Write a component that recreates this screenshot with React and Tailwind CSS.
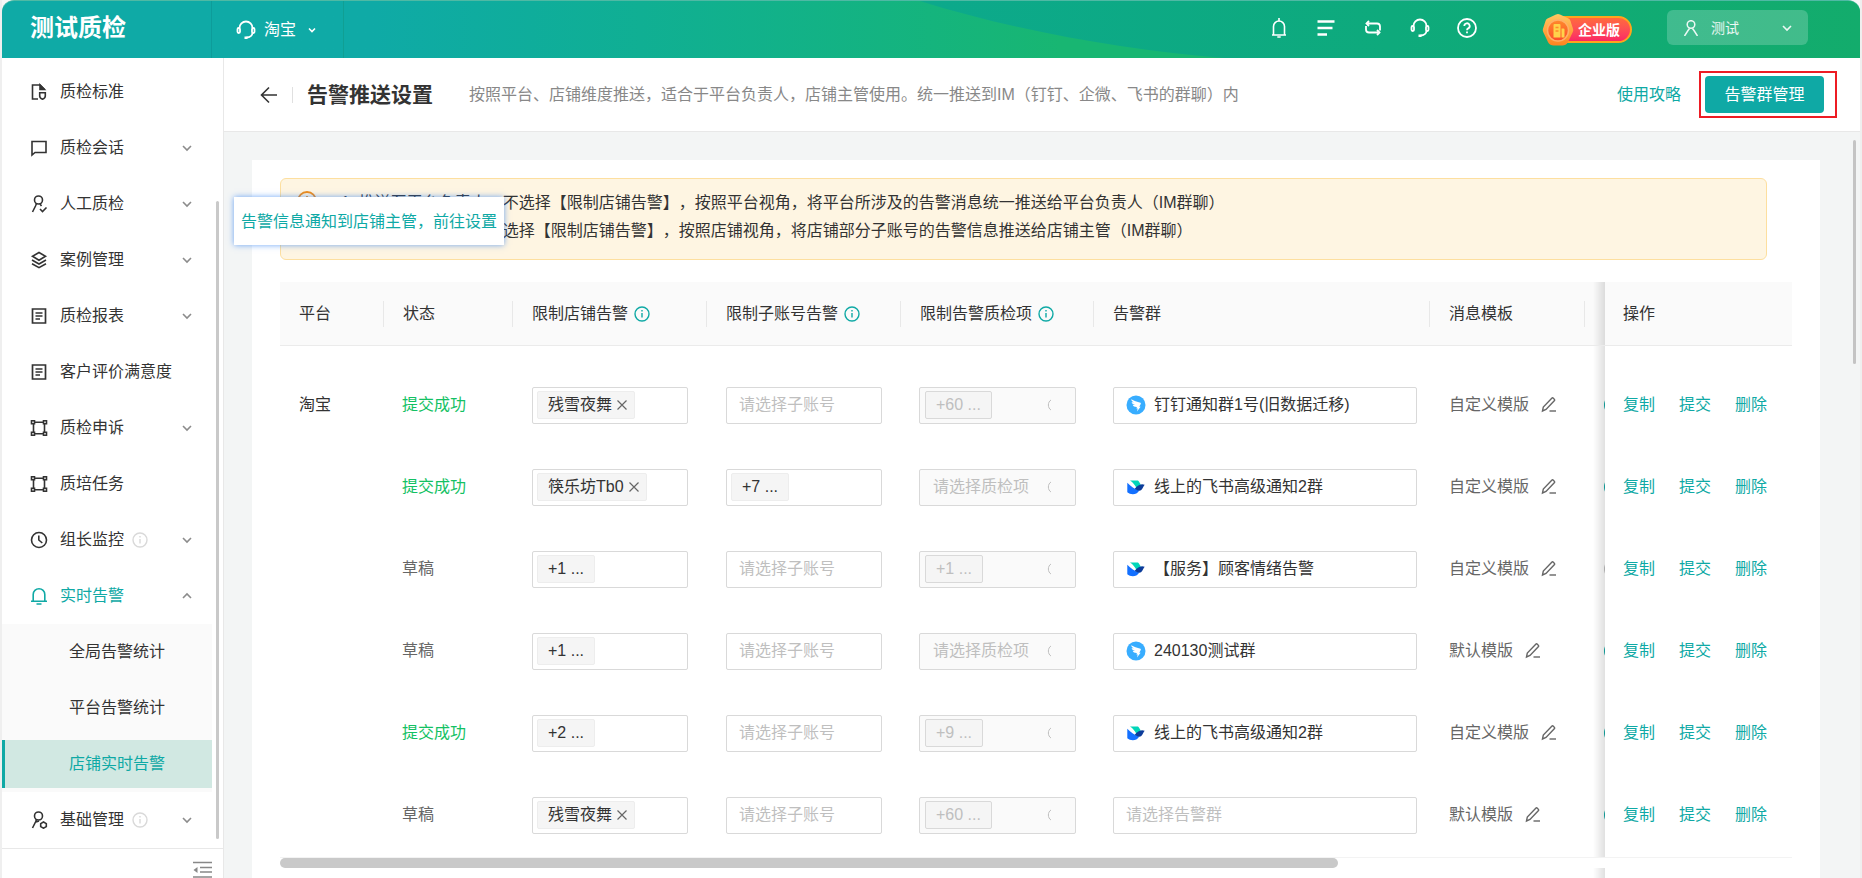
import React, { useState } from "react";

const Svg = ({ size = 18, sw = 2, children, className = "", vb = 24 }) => (
  <svg
    width={size}
    height={size}
    viewBox={`0 0 ${vb} ${vb}`}
    fill="none"
    stroke="currentColor"
    strokeWidth={sw}
    className={`shrink-0 ${className}`}
    aria-hidden="true"
  >
    {children}
  </svg>
);

const icons = {
  standard: (
    <Svg vb={18} sw={1.6}>
      <path d="M8 16H2.5V2H10l4.5 4.5" />
      <path d="M10 2v4.5h4.5z" fill="currentColor" />
      <path d="M9.7 9.7h5.6V13c0 1.8-1.3 2.6-2.8 3.2-1.5-.6-2.8-1.4-2.8-3.2z" />
    </Svg>
  ),
  chat: (
    <Svg vb={18} sw={1.6}>
      <path d="M2 2.5h14v11H5L2 16z" />
    </Svg>
  ),
  manual: (
    <Svg vb={18} sw={1.6}>
      <circle cx="8.5" cy="5" r="4" />
      <path d="M6.5 8.5L5.5 11 2.5 17M10 9l1.5 2" />
      <path d="M10 14l2.5 2.5L16.5 12.5" />
    </Svg>
  ),
  layers: (
    <Svg vb={18} sw={1.6}>
      <path d="M9 1.5l6.5 3.8L9 9.2 2.5 5.3z" />
      <path d="M2 9l7 4 7-4M2 12.7l7 4 7-4" />
    </Svg>
  ),
  report: (
    <Svg vb={18} sw={1.7}>
      <path d="M2.5 2h13v14h-13z" />
      <path d="M5.5 6h7M5.5 9h7M5.5 12h4.5" strokeWidth="1.4" />
    </Svg>
  ),
  nodes: (
    <Svg vb={18} sw={1.6}>
      <path d="M1.5 1.8h3v3h-3zM13.5 1.8h3v3h-3zM1.5 13.2h3v3h-3zM13.5 13.2h3v3h-3z" />
      <path d="M4.5 3.3h9M4.5 14.7h9M3.5 4.8v8.4M14.5 4.8v8.4" />
    </Svg>
  ),
  clock: (
    <Svg vb={18} sw={1.6}>
      <circle cx="9" cy="9" r="7.5" />
      <path d="M8.8 4.5V9l3.5 3" />
    </Svg>
  ),
  bell: (
    <Svg vb={18} sw={1.6}>
      <path d="M1 14.2h16M3.2 14V7.5a5.8 5.8 0 0 1 11.6 0V14M6.5 17h5" />
    </Svg>
  ),
  admin: (
    <Svg vb={18} sw={1.6}>
      <circle cx="8.5" cy="5" r="4" />
      <path d="M6.5 8.5L5.5 11 2.5 17M6 11l3-1" />
      <path d="M13.5 11l2.8 1.6v3L13.5 17.2l-2.8-1.6v-3z" />
    </Svg>
  ),
};

const menu = [
  { label: "质检标准", icon: icons.standard },
  { label: "质检会话", icon: icons.chat, arrow: true },
  { label: "人工质检", icon: icons.manual, arrow: true },
  { label: "案例管理", icon: icons.layers, arrow: true },
  { label: "质检报表", icon: icons.report, arrow: true },
  { label: "客户评价满意度", icon: icons.report },
  { label: "质检申诉", icon: icons.nodes, arrow: true },
  { label: "质培任务", icon: icons.nodes },
  { label: "组长监控", icon: icons.clock, arrow: true, info: true },
  {
    label: "实时告警",
    icon: icons.bell,
    arrow: true,
    open: true,
    children: ["全局告警统计", "平台告警统计", "店铺实时告警"],
  },
  { label: "基础管理", icon: icons.admin, arrow: true, info: true },
];

const rows = [
  { platform: "淘宝", done: true, shop: "残雪夜舞", item: "+60 ...", im: "ding", group: "钉钉通知群1号(旧数据迁移)", tpl: "自定义模版", on: true },
  { done: true, shop: "筷乐坊Tb0", sub: "+7 ...", im: "feishu", group: "线上的飞书高级通知2群", tpl: "自定义模版", on: true },
  { shop: "+1 ...", item: "+1 ...", im: "feishu", group: "【服务】顾客情绪告警", tpl: "自定义模版", on: false },
  { shop: "+1 ...", im: "ding", group: "240130测试群", tpl: "默认模版", on: true },
  { done: true, shop: "+2 ...", item: "+9 ...", im: "feishu", group: "线上的飞书高级通知2群", tpl: "自定义模版", on: true },
  { shop: "残雪夜舞", item: "+60 ...", tpl: "默认模版", on: true },
];

const columns = [
  { title: "平台", width: "w-[104px]" },
  { title: "状态", width: "w-[129px]" },
  { title: "限制店铺告警", width: "w-[194px]", info: true },
  { title: "限制子账号告警", width: "w-[194px]", info: true },
  { title: "限制告警质检项", width: "w-[193px]", info: true },
  { title: "告警群", width: "w-[336px]" },
  { title: "消息模板", width: "w-[155px]" },
];

// fixed right column with the soft edge on its left side
const fixedCol =
  "sticky right-0 before:absolute before:inset-y-0 before:right-full before:w-3 before:bg-linear-to-l before:from-black/12 before:to-transparent";

const Chevron = ({ up, className = "" }) => (
  <Svg size={10} vb={10} sw={1.6} className={className}>
    <path d={up ? "M1 7l4-4 4 4" : "M1 3l4 4 4-4"} />
  </Svg>
);

const InfoIcon = ({ className = "" }) => (
  <Svg size={16} vb={16} sw={1.4} className={className}>
    <circle cx="8" cy="8" r="7" />
    <path d="M8 7v4.5M8 4v1.5" />
  </Svg>
);

const HeadsetIcon = ({ size = 20 }) => (
  <Svg size={size} vb={20} sw={1.8}>
    <path d="M3.5 8a6.5 6.5 0 0 1 13 0M16.5 12.5c0 3-2.5 5-6 5" />
    <rect x="1.5" y="8" width="2.5" height="5" rx="1.2" />
    <rect x="16" y="8" width="2.5" height="5" rx="1.2" />
    <path d="M8.5 17.8h3" strokeWidth="2.5" />
  </Svg>
);

const DingIcon = () => (
  <svg width="20" height="20" viewBox="0 0 20 20" className="shrink-0" aria-hidden="true">
    <circle cx="10" cy="10" r="9.5" fill="#38adff" />
    <path
      d="M5.2 4.2c2.5 1.6 6 2.3 9.3 3.6.5.2.4.7.1 1.4l-1.3 2.5h1.3L11 16.5l.7-3.1h-1.3l.5-1.5c-2.3.1-3.6-.7-4.3-2.2 1 .3 2 .3 2.4.2-1.6-.4-2.9-1.3-3.4-3l2.1.5C6.3 6.5 5.3 5.5 5.2 4.2z"
      fill="#fff"
    />
  </svg>
);

const FeishuIcon = () => (
  <svg width="20" height="20" viewBox="0 0 20 20" className="shrink-0" aria-hidden="true">
    <path d="M4 3.500h8c1.300 1.200 2.300 3 2.700 4.500l-4 3.200C9 8 7 5.500 4 3.500z" fill="#00d6b9" />
    <path d="M1.300 5.800c3.500 3.600 7.300 6.600 12 7.600-1.700 2.700-4 3.800-6.400 3.800-2.200 0-4.200-.7-5.600-1.900z" fill="#1370ff" />
    <path d="M18.700 7.800c-1.400 1.200-1.900 4.300-3.700 5.500-2.300 1-4.700-.4-6.200-1.600 2.300-2.600 5.400-5.700 9.900-3.900z" fill="#0c3c9a" />
  </svg>
);

const EnterpriseBadge = () => (
  <div className="flex items-center pt-1">
    <svg width="32" height="34" viewBox="0 0 32 34" className="relative z-10 shrink-0" aria-hidden="true">
      <defs>
        <linearGradient id="gem" x1="0" y1="0" x2="0" y2="1">
          <stop offset="0" stopColor="#ffc862" />
          <stop offset="1" stopColor="#ff8420" />
        </linearGradient>
        <linearGradient id="coin" x1="0" y1="0" x2="0" y2="1">
          <stop offset="0" stopColor="#ff8a2b" />
          <stop offset="1" stopColor="#fb4a2c" />
        </linearGradient>
      </defs>
      <path
        d="M14 1.5q2-1 4 0l8.500 4q1.600.8 2 2.500l2.600 8q.4 1.500-.3 3l-5 10.500q-.7 1.500-2.300 2.200-1.500.8-3 .8h-9q-1.500 0-3-.8-1.600-.7-2.300-2.200L1.200 19q-.7-1.500-.3-3l2.600-8q.4-1.700 2-2.500z"
        fill="url(#gem)"
      />
      <circle cx="16" cy="17.5" r="10.5" fill="url(#coin)" stroke="#ffb066" strokeWidth="1.5" />
      <path d="M11.500 12q0-1 1-1h5q1 0 1 1v12.500h-7zM19.500 15.500h2q1 0 1 1v8h-3z" fill="#ffd24a" />
      <path d="M13.500 14.500h3M13.500 18h3" stroke="#ff8a2b" strokeWidth="1.3" />
    </svg>
    <span className="-ml-4 flex h-[27px] items-center rounded-r-full border-2 border-[#ffa41c] bg-linear-to-b from-[#ff6a3b] to-[#fb2465] pr-2.5 pl-4.5 text-sm font-bold text-white">
      企业版
    </span>
  </div>
);

const Header = () => (
  <header className="relative flex h-[58px] shrink-0 items-center overflow-hidden rounded-t-xl border-t border-[#4fb9a4] bg-linear-to-r from-[#0faaa6] from-20% to-[#18b672] to-57% text-white">
    <svg className="absolute inset-y-0 right-0 h-full w-[52%]" viewBox="0 0 966 58" preserveAspectRatio="none" aria-hidden="true">
      <defs>
        <linearGradient id="wave" x1="0" y1="0" x2="1" y2="0">
          <stop offset="0" stopColor="#0ca98c" />
          <stop offset="0.5" stopColor="#0eaa7c" />
          <stop offset="1" stopColor="#13ac6c" />
        </linearGradient>
      </defs>
      <path d="M26 0C120 30 230 50 330 58H966V0z" fill="url(#wave)" />
    </svg>
    <div className="relative flex h-full w-[210px] items-center border-r border-[#0d9c9a] pb-1 pl-7">
      <span className="text-2xl font-bold">测试质检</span>
    </div>
    <button className="relative flex h-full w-[132px] items-center gap-2 border-r border-[#109f93] pl-6 text-base">
      <HeadsetIcon />
      <span>淘宝</span>
      <Svg size={8} vb={8} sw={1.6} className="ml-1">
        <path d="M1 2.5l3 3 3-3" />
      </Svg>
    </button>
    <div className="relative ml-auto flex items-center pr-[52px] pb-1">
      <div className="flex items-center gap-[27px]">
        <button aria-label="通知">
          <Svg size={20} vb={20} sw={1.6}>
            <path d="M3 17h14M4.500 17V8.500a5.500 5.500 0 0 1 11 0V17M10 0v3M8.300 19h3.400" />
          </Svg>
        </button>
        <button aria-label="列表">
          <Svg size={20} vb={20} sw={2.6}>
            <path d="M1.500 3.500h17M1.500 10h15M1.500 16.500h9.500" />
          </Svg>
        </button>
        <button aria-label="切换">
          <Svg size={20} vb={20} sw={1.8}>
            <path d="M5 5.500h9a3 3 0 0 1 3 3v4M15 14.500H6a3 3 0 0 1-3-3V8" />
            <path d="M6 3L3.500 5.500 6 8M14 12l2.500 2.500L14 17" />
          </Svg>
        </button>
        <button aria-label="客服">
          <HeadsetIcon />
        </button>
        <button aria-label="帮助">
          <Svg size={20} vb={20} sw={1.8}>
            <circle cx="10" cy="10" r="9" />
            <path d="M7.300 8a2.700 2.700 0 1 1 3.900 2.400c-.8.400-1.200.8-1.200 1.800M10 13.500v1.800" />
          </Svg>
        </button>
      </div>
      <div className="ml-[65px]">
        <EnterpriseBadge />
      </div>
      <button className="ml-[35px] flex h-[35px] w-[141px] items-center rounded-md bg-white/20 px-4 text-sm text-white/90">
        <Svg size={16} vb={16} sw={1.5}>
          <circle cx="8" cy="4.5" r="3.8" />
          <path d="M1.5 16l3.5-5.5 1.5-2M14.5 16L11 10.5 9.5 8.5" />
        </Svg>
        <span className="ml-3">测试</span>
        <Chevron className="ml-auto" />
      </button>
    </div>
  </header>
);

const Sidebar = () => (
  <aside className="relative flex w-[222px] shrink-0 flex-col border-r border-[#e8e8e8] bg-white">
    <nav className="min-h-0 flex-1 overflow-hidden pt-1.5 pr-[11px]">
      {menu.map((m) => (
        <div key={m.label}>
          <a
            href="#"
            className={`flex h-14 items-center pr-5 pl-7 text-base ${m.open ? "text-[#0fa9a5]" : "text-[#333]"}`}
          >
            {m.icon}
            <span className="ml-3">{m.label}</span>
            {m.info && <InfoIcon className="ml-2 text-[#d9d9d9]" />}
            {m.arrow && <Chevron up={m.open} className="ml-auto text-[#8c8c8c]" />}
          </a>
          {m.children && (
            <div className="bg-[#fafafa]">
              {m.children.map((c, i) => (
                <div key={c} className="flex h-14 items-center">
                  <a
                    href="#"
                    className={`flex h-12 flex-1 items-center border-l-3 pl-16 text-base ${
                      i === 2 ? "border-[#0fa9a5] bg-[#d1e8e2] text-[#0fa9a5]" : "border-transparent text-[#333]"
                    }`}
                  >
                    {c}
                  </a>
                </div>
              ))}
            </div>
          )}
        </div>
      ))}
    </nav>
    <div className="absolute top-[143px] right-1 bottom-[39px] w-[3px] rounded-full bg-[#c9c9c9]" />
    <button
      aria-label="收起菜单"
      className="flex h-[30px] items-end justify-end overflow-hidden border-t border-[#e8e8e8] pr-2.5 text-[#888]"
    >
      <svg width="20" height="17" viewBox="0 0 20 17" fill="none" stroke="currentColor" strokeWidth="1.6" aria-hidden="true">
        <path d="M0 1.5h19M7 6.5h12M7 11h12M0 16h19" />
        <path d="M4.5 6v6L0.5 9z" fill="currentColor" stroke="none" />
      </svg>
    </button>
  </aside>
);

const Tag = ({ text, closable, disabled }) => (
  <span
    className={`flex h-7 items-center gap-1 rounded-xs border bg-[#f5f5f5] pl-2.5 ${closable ? "pr-1.5" : "pr-2.5"} ${
      disabled ? "border-[#d9d9d9] text-[#bfbfbf]" : "border-[#ededed] text-[#333]"
    }`}
  >
    {text}
    {closable && (
      <Svg size={12} vb={12} sw={1.2} className="text-[#666]">
        <path d="M1.5 1.5l9 9M10.5 1.5l-9 9" />
      </Svg>
    )}
  </span>
);

const SelectBox = ({ value, placeholder, disabled }) => (
  <button
    disabled={disabled}
    className={`flex h-[37px] w-full items-center rounded-xs border border-[#d9d9d9] text-base ${
      disabled ? "bg-[#fafafa] pl-[5px]" : "bg-white pl-1"
    }`}
  >
    {value ? (
      <Tag text={value} disabled={disabled} closable={!value.startsWith("+")} />
    ) : (
      <span className="pl-2 text-[#bfbfbf]">{placeholder}</span>
    )}
    {disabled && (
      <svg width="4" height="12" viewBox="0 0 4 12" fill="none" stroke="#bfbfbf" className="mr-6 ml-auto" aria-hidden="true">
        <path d="M4 1C.5 3 .5 9 4 11" />
      </svg>
    )}
  </button>
);

const PushTable = () => {
  const [switches, setSwitches] = useState(rows.map((r) => r.on));

  return (
    <div className="mt-[22px] overflow-hidden">
      <table className="w-[2165px] table-fixed border-separate border-spacing-0 text-left text-base text-[#333]">
        <thead>
          <tr className="h-16">
            {columns.map((c) => (
              <th key={c.title} className={`${c.width} border-b border-[#ebebeb] bg-[#fafafa] p-0 font-normal`}>
                <div className="flex h-[26px] items-center gap-1.5 border-r border-[#e8e8e8] pl-[19px] whitespace-nowrap">
                  {c.title}
                  {c.info && <InfoIcon className="text-[#0fa9a5]" />}
                </div>
              </th>
            ))}
            <th className="border-b border-[#ebebeb] bg-[#fafafa]" />
            <th className={`${fixedCol} w-[187px] border-b border-[#ebebeb] bg-[#fafafa] pl-[18px] font-normal`}>操作</th>
          </tr>
        </thead>
        <tbody>
          <tr className="h-[18px]">
            <td colSpan={8} />
            <td className={`${fixedCol} bg-white`} />
          </tr>
          {rows.map((r, i) => (
            <tr key={i} className="h-[82px]">
              <td className="pl-[19px]">{r.platform}</td>
              <td className={`pl-[18px] ${r.done ? "text-[#13c163]" : "text-[#666]"}`}>{r.done ? "提交成功" : "草稿"}</td>
              <td className="px-[19px]">
                <SelectBox value={r.shop} />
              </td>
              <td className="px-[19px]">
                <SelectBox value={r.sub} placeholder="请选择子账号" />
              </td>
              <td className="px-[18px]">
                <SelectBox value={r.item} placeholder="请选择质检项" disabled />
              </td>
              <td className="pr-[13px] pl-[19px]">
                <button
                  className={`flex h-[37px] w-full items-center gap-2 rounded-xs border border-[#d9d9d9] bg-white pl-3 text-base ${
                    r.group ? "" : "text-[#bfbfbf]"
                  }`}
                >
                  {r.im === "ding" && <DingIcon />}
                  {r.im === "feishu" && <FeishuIcon />}
                  <span>{r.group || "请选择告警群"}</span>
                </button>
              </td>
              <td className="pl-[19px] text-[#666]">
                <span className="flex items-center gap-3">
                  {r.tpl}
                  <button aria-label="编辑模版">
                    <Svg size={16} vb={16} sw={1.4}>
                      <path d="M1.5 14l.8-4L11 1c.7-.7 3.3 1.6 2.5 2.5L5 12.500z" />
                      <path d="M8.5 14H15" />
                    </Svg>
                  </button>
                </span>
              </td>
              <td className="pl-[19px]">
                <button
                  role="switch"
                  aria-checked={switches[i]}
                  aria-label="启用"
                  onClick={() => setSwitches(switches.map((s, n) => (n === i ? !s : s)))}
                  className={`block h-[22px] w-11 rounded-full ${switches[i] ? "bg-[#0fa9a5]" : "bg-[#bfbfbf]"}`}
                />
              </td>
              <td className={`${fixedCol} bg-white pl-[18px]`}>
                <div className="flex gap-6 text-[#0fa9a5]">
                  <a href="#">复制</a>
                  <a href="#">提交</a>
                  <a href="#">删除</a>
                </div>
              </td>
            </tr>
          ))}
          <tr className="h-[82px]">
            <td colSpan={8} />
            <td className={`${fixedCol} bg-white`} />
          </tr>
        </tbody>
      </table>
    </div>
  );
};

const App = () => (
  <div className="flex h-screen flex-col overflow-hidden border-x-2 border-[#efefef] bg-[#f7f7f7] font-['Liberation_Sans','Noto_Sans_CJK_SC',sans-serif] [text-spacing-trim:space-all]">
    <Header />
    <div className="relative flex min-h-0 flex-1">
      <Sidebar />
      <main className="flex min-w-0 flex-1 flex-col bg-[#f3f5f5]">
        <div className="flex h-[74px] shrink-0 items-center border-b border-[#e8e8e8] bg-white pr-[23px] pl-9">
          <button aria-label="返回" className="text-[#333]">
            <Svg size={18} vb={18} sw={1.6}>
              <path d="M17 9H2M9 1.5L1.5 9 9 16.5" />
            </Svg>
          </button>
          <span className="ml-3.5 h-4 w-px bg-[#e0e0e0]" />
          <h1 className="ml-3.5 text-[21px] font-bold text-[#333]">告警推送设置</h1>
          <p className="ml-9 text-base whitespace-nowrap text-[#888]">
            按照平台、店铺维度推送，适合于平台负责人，店铺主管使用。统一推送到IM（钉钉、企微、飞书的群聊）内
          </p>
          <a href="#" className="ml-auto text-base whitespace-nowrap text-[#0fa9a5]">
            使用攻略
          </a>
          <div className="ml-[18px] border-2 border-[#ed1c24] py-[3px] pr-[11px] pl-1">
            <button className="block h-[37px] w-[119px] rounded bg-[#0fa9a5] text-base text-white">告警群管理</button>
          </div>
        </div>

        <div className="relative min-h-0 flex-1 overflow-hidden pt-7 pr-10 pl-7">
          <div className="bg-white px-7 pt-[18px]">
            <div className="mr-[25px] flex h-[82px] rounded-md border border-[#fddf9f] bg-[#fef5e2] pt-2.5 pl-4">
              <Svg size={20} vb={20} sw={1.8} className="mt-0.5 text-[#f08c1a]">
                <circle cx="10" cy="10" r="9" />
                <path d="M10 5v6M10 13v2" />
              </Svg>
              <ul className="ml-6 text-base leading-7 text-[#333]">
                <li>1. 推送至平台负责人，不选择【限制店铺告警】，按照平台视角，将平台所涉及的告警消息统一推送给平台负责人（IM群聊）</li>
                <li>2. 推送至店铺负责人，选择【限制店铺告警】，按照店铺视角，将店铺部分子账号的告警信息推送给店铺主管（IM群聊）</li>
              </ul>
            </div>
            <PushTable />
          </div>
          <div className="absolute right-[68px] bottom-2.5 left-14 border-t border-[#f3f3f3] bg-white">
            <div className="h-2.5 w-[70%] rounded-full bg-[#c9c9c9]" />
          </div>
          <div className="absolute top-2 right-1 h-56 w-[3px] rounded-full bg-[#c4c4c4]" />
        </div>
      </main>

      <a
        href="#"
        className="absolute top-[139px] left-[232px] flex h-12 w-[270px] items-center justify-center bg-white pt-0.5 text-base whitespace-nowrap text-[#0fa9a5] shadow-[0_0_6px_rgba(50,130,245,0.7)]"
      >
        告警信息通知到店铺主管，前往设置
      </a>
    </div>
  </div>
);

export default App;
